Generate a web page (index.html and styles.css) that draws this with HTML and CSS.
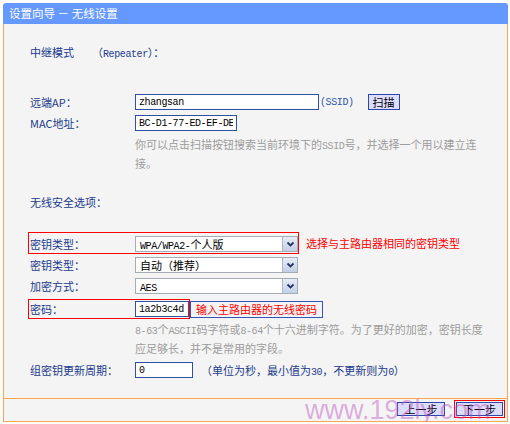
FILE: index.html
```html
<!DOCTYPE html>
<html lang="zh-CN">
<head>
<meta charset="utf-8">
<title>设置向导 - 无线设置</title>
<link rel="stylesheet" href="styles.css">
</head>
<body>
<div class="frame">
  <div class="hd">设置向导 － 无线设置</div>
  <div class="main">
    <div class="row r1"><span class="lbl lbl-s">中继模式</span><span class="rep">（<span class="lat">Repeater</span>）：</span></div>

    <div class="row r2">
      <span class="lbl">远端AP：</span>
      <input class="inp w-ssid" value="zhangsan" readonly>
      <span class="ssid lat">(SSID)</span>
      <button class="btn scan">扫描</button>
    </div>

    <div class="row r3">
      <span class="lbl">MAC地址：</span>
      <input class="inp w-mac" value="BC-D1-77-ED-EF-DE" readonly>
    </div>

    <div class="hint h1">你可以点击扫描按钮搜索当前环境下的<span class="lat">SSID</span>号，并选择一个用以建立连<br>接。</div>

    <div class="row r5"><span class="lbl sec">无线安全选项：</span></div>

    <div class="row r6">
      <div class="redbox rb1">
        <span class="lbl">密钥类型：</span>
        <div class="sel"><span class="val"><span class="lat">WPA/WPA2-</span>个人版</span><span class="arr"><svg width="15" height="14" viewBox="0 0 15 14"><path d="M4.5 5.5 L7.5 8.5 L10.5 5.5" fill="none" stroke="#26346a" stroke-width="1.8"/></svg></span></div>
      </div>
      <span class="note">选择与主路由器相同的密钥类型</span>
    </div>

    <div class="row r7">
      <span class="lbl">密钥类型：</span>
      <div class="sel"><span class="val">自动（推荐）</span><span class="arr"><svg width="15" height="14" viewBox="0 0 15 14"><path d="M4.5 5.5 L7.5 8.5 L10.5 5.5" fill="none" stroke="#26346a" stroke-width="1.8"/></svg></span></div>
    </div>

    <div class="row r8">
      <span class="lbl">加密方式：</span>
      <div class="sel"><span class="val"><span class="lat">AES</span></span><span class="arr"><svg width="15" height="14" viewBox="0 0 15 14"><path d="M4.5 5.5 L7.5 8.5 L10.5 5.5" fill="none" stroke="#26346a" stroke-width="1.8"/></svg></span></div>
    </div>

    <div class="row r9">
      <div class="redbox rb2">
        <span class="lbl">密码：</span>
        <input class="inp w-pw" value="1a2b3c4d" readonly>
      </div>
      <span class="bluebox">输入主路由器的无线密码</span>
    </div>

    <div class="hint h2"><span class="lat">8-63</span>个<span class="lat">ASCII</span>码字符或<span class="lat">8-64</span>个十六进制字符。为了更好的加密，密钥长度<br>应足够长，并不是常用的字段。</div>

    <div class="row r10">
      <span class="lbl">组密钥更新周期：</span>
      <input class="inp w-grp" value="0" readonly>
      <span class="unit">（单位为秒，最小值为<span class="lat">30</span>，不更新则为<span class="lat">0</span>）</span>
    </div>
  </div>
  <div class="footer">
    <button class="btn fbtn prev">上一步</button>
    <span class="nextwrap"><button class="btn fbtn next">下一步</button></span>
    <span class="wm">www.192ly.com</span>
  </div>
</div>
</body>
</html>
```
FILE: styles.css
```css
body {
  margin: 0;
  background: #fff;
  font-family: "Noto Sans CJK SC", sans-serif;
  font-size: 11px;
}

.frame {
  margin: 3px 0 0 3px;
  width: 505px;
}

.hd {
  height: 21px;
  background: #6699ff;
  border-radius: 3px 3px 0 0;
  color: #fff;
  padding-left: 6px;
  line-height: 21px;
  font-size: 11.5px;
}

.main {
  height: 375px;
  box-sizing: border-box;
  border: 1px solid #ffa54f;
  border-top: 0;
  background: #f4f4f4;
  padding: 20px 0 0 26px;
  display: flex;
  flex-direction: column;
}

.lat {
  font-family: "Liberation Mono", monospace;
  font-size: 10px;
  letter-spacing: -0.4px;
}

.row {
  display: flex;
  align-items: center;
  height: 16px;
  flex: none;
}

.lbl {
  width: 105px;
  flex: none;
  color: #1a3a8c;
  white-space: nowrap;
}

.lbl-s { width: 62px; }
.rep { color: #1a3a8c; }

.r2 { margin-top: 34px; }
.r3 { margin-top: 5px; }

.hint {
  color: #9c9c9c;
  line-height: 16px;
  margin-left: 105px;
  flex: none;
}
.h1 { margin-top: 5px; }
.h2 { margin-top: 2px; }

.r5 { margin-top: 23px; }

.r6 { margin-top: 22px; height: 22px; }
.r7 { margin-top: 3px; }
.r8 { margin-top: 5px; }
.r9 { margin-top: 5px; height: 20px; }
.r10 { margin-top: 6px; }

.redbox {
  display: flex;
  align-items: center;
  border: 1px solid #ff0000;
  margin-left: -2px;
  padding-left: 1px;
  box-sizing: border-box;
}
.rb1 { height: 22px; align-items: flex-end; padding-bottom: 1px; }
.rb2 { height: 20px; }

.inp {
  height: 16px;
  box-sizing: border-box;
  border: 1px solid #2f4f9f;
  background: #fff;
  padding: 0 3px;
  margin: 0;
  font-family: "Liberation Mono", monospace;
  font-size: 10px;
  letter-spacing: -0.4px;
  color: #000;
  outline: none;
}
.w-ssid { width: 184px; }
.w-mac { width: 102px; }
.w-pw { width: 54px; }
.w-grp { width: 58px; }

.ssid {
  color: #2d56b0;
  margin-left: 1px;
}

.btn {
  box-sizing: border-box;
  border: 1px solid #2b48a8;
  background: #dcdcff;
  font-family: "Noto Sans CJK SC", sans-serif;
  font-size: 11px;
  color: #000;
  padding: 0;
  margin: 0;
  line-height: 12px;
}
.scan {
  width: 32px;
  height: 16px;
  margin-left: 14px;
}

.sel {
  width: 163px;
  height: 16px;
  box-sizing: border-box;
  border: 1px solid #a5acb5;
  background: #fff;
  display: flex;
  align-items: center;
}
.val {
  padding-left: 4px;
  color: #000;
  white-space: nowrap;
}
.arr {
  margin-left: auto;
  width: 15px;
  height: 14px;
  box-sizing: border-box;
  background: linear-gradient(#e6ecf6, #c3d0e4);
  border-left: 1px solid #a9b6cc;
  display: block;
}
.arr svg { display: block; }

.note {
  color: #ff0000;
  margin-left: 7px;
  white-space: nowrap;
}

.bluebox {
  color: #ff0000;
  border: 1px solid #3355bb;
  height: 17px;
  box-sizing: border-box;
  line-height: 15px;
  padding: 0 5px 0 5px;
  white-space: nowrap;
}

.unit {
  color: #1a3a8c;
  margin-left: 8px;
  white-space: nowrap;
}

.footer {
  height: 23px;
  box-sizing: border-box;
  border: 1px solid #ffa54f;
  border-top: 0;
  background: #f4f4f4;
  display: flex;
  justify-content: flex-end;
  align-items: flex-start;
  padding: 1px 2px 0 0;
  position: relative;
}

.fbtn { height: 14px; }
.prev { width: 48px; margin-top: 2px; }
.nextwrap {
  border: 1px solid #ff0000;
  padding: 1px;
  margin-left: 9px;
  display: flex;
}
.next { width: 47px; }

.wm {
  position: absolute;
  left: 301px;
  top: -2px;
  font-family: "Liberation Sans", Arial, sans-serif;
  font-size: 27px;
  line-height: 27px;
  color: rgba(190, 80, 190, 0.45);
  pointer-events: none;
  white-space: nowrap;
}
```
